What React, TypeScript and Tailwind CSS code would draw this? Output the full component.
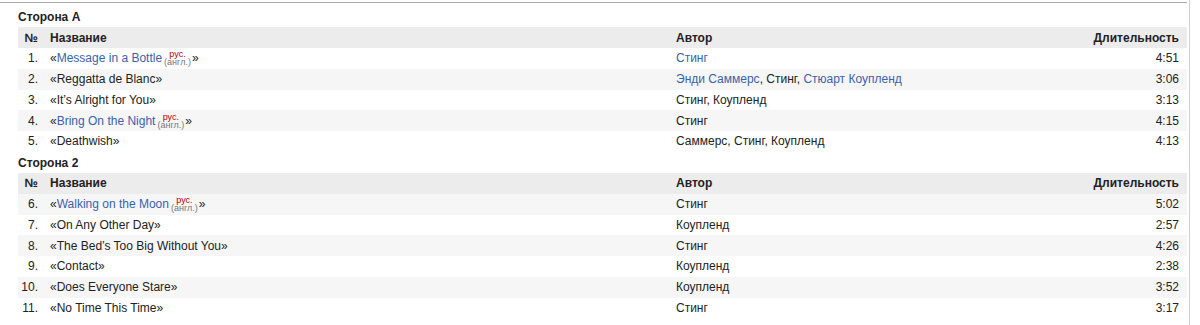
import React from "react";

type Part = { t: string; link?: boolean };
type Row = { n: string; title: string; link?: boolean; note?: boolean; author: Part[]; dur: string };

const side1: Row[] = [
  { n: "1.", title: "Message in a Bottle", link: true, note: true, author: [{ t: "Стинг", link: true }], dur: "4:51" },
  { n: "2.", title: "Reggatta de Blanc", author: [{ t: "Энди Саммерс", link: true }, { t: ", Стинг, " }, { t: "Стюарт Коупленд", link: true }], dur: "3:06" },
  { n: "3.", title: "It’s Alright for You", author: [{ t: "Стинг, Коупленд" }], dur: "3:13" },
  { n: "4.", title: "Bring On the Night", link: true, note: true, author: [{ t: "Стинг" }], dur: "4:15" },
  { n: "5.", title: "Deathwish", author: [{ t: "Саммерс, Стинг, Коупленд" }], dur: "4:13" },
];

const side2: Row[] = [
  { n: "6.", title: "Walking on the Moon", link: true, note: true, author: [{ t: "Стинг" }], dur: "5:02" },
  { n: "7.", title: "On Any Other Day", author: [{ t: "Коупленд" }], dur: "2:57" },
  { n: "8.", title: "The Bed’s Too Big Without You", author: [{ t: "Стинг" }], dur: "4:26" },
  { n: "9.", title: "Contact", author: [{ t: "Коупленд" }], dur: "2:38" },
  { n: "10.", title: "Does Everyone Stare", author: [{ t: "Коупленд" }], dur: "3:52" },
  { n: "11.", title: "No Time This Time", author: [{ t: "Стинг" }], dur: "3:17" },
];

function Note() {
  return (
    <span className="inline-flex flex-col items-center text-[9px] ml-[2px] mr-[1px]">
      <span className="leading-[8px] text-[#ba0000]">рус.</span>
      <span className="leading-[8px] text-[#777]">(англ.)</span>
    </span>
  );
}

function Section({ title, rows, firstGray }: { title: string; rows: Row[]; firstGray: boolean }) {
  return (
    <div>
      <div className="h-[21px] flex items-center font-bold text-[#222] pt-[1px]">{title}</div>
      <div className="flex items-center h-[21px] bg-[#ececec] font-bold text-[#222]">
        <div className="w-[32px] shrink-0 text-right pr-[12px]">№</div>
        <div className="w-[626px] shrink-0">Название</div>
        <div className="flex-1">Автор</div>
        <div className="pr-[8px] text-right">Длительность</div>
      </div>
      {rows.map((r, i) => {
        const gray = firstGray ? i % 2 === 0 : i % 2 === 1;
        return (
          <div key={r.n} className={`flex items-center h-[20.75px] text-[#222] ${gray ? "bg-[#f6f6f6]" : "bg-white"}`}>
            <div className="w-[32px] shrink-0 text-right pr-[12px]">{r.n}</div>
            <div className="w-[626px] shrink-0 flex items-center whitespace-nowrap">
              <span>«</span>
              <span className={r.link ? "text-[#3a62ac]" : ""}>{r.title}</span>
              {r.note && <Note />}
              <span>»</span>
            </div>
            <div className="flex-1 whitespace-nowrap">
              {r.author.map((a, j) => (
                <span key={j} className={a.link ? "text-[#3a62ac]" : ""}>{a.t}</span>
              ))}
            </div>
            <div className="pr-[8px] text-right">{r.dur}</div>
          </div>
        );
      })}
    </div>
  );
}

export default function App() {
  return (
    <div className="w-[1200px] h-[325px] bg-white overflow-hidden text-[12px]" style={{ fontFamily: '"Liberation Sans", Arial, sans-serif' }}>
      <div className="w-[1190px] h-[325px] border-r border-[#d0d0d0] pt-[2px]">
        <div className="w-[1187px] h-[1px] bg-[#a8a8a8]" />
        <div className="pl-[18px] pr-[2px] pt-[3px]">
          <Section title="Сторона А" rows={side1} firstGray={false} />
          <Section title="Сторона 2" rows={side2} firstGray={true} />
        </div>
      </div>
    </div>
  );
}
